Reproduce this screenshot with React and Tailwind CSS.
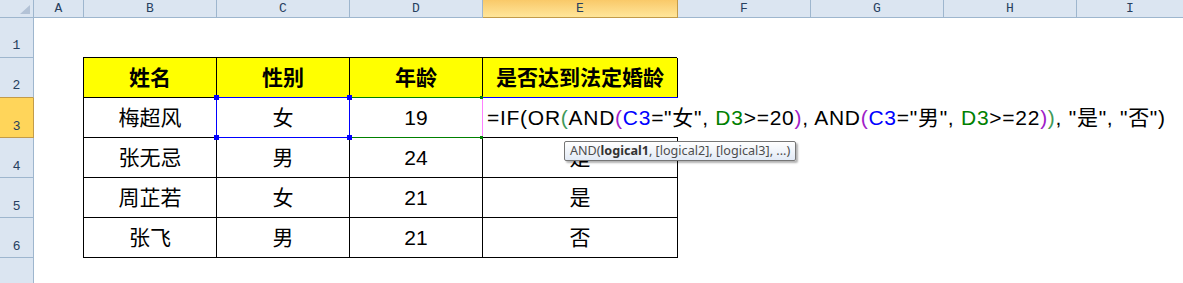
import React from 'react';

const sans = "'Liberation Sans','Noto Sans CJK SC',sans-serif";
const mono = "'Liberation Mono','DejaVu Sans Mono',monospace";

const colHeads = [
  ['A', 'w-[50px]'],
  ['B', 'w-[133px]'],
  ['C', 'w-[133px]'],
  ['D', 'w-[133px]'],
  ['E', 'w-[195px]'],
  ['F', 'w-[133px]'],
  ['G', 'w-[133px]'],
  ['H', 'w-[133px]'],
];

const rows = [
  ['梅超风', '女', '19', ''],
  ['张无忌', '男', '24', '是'],
  ['周芷若', '女', '21', '是'],
  ['张飞', '男', '21', '否'],
];

function RowHead({ n, active, serif, goldBottom }) {
  return (
    <div
      className={`flex h-[40px] w-[34px] shrink-0 items-end justify-center border-r border-b pb-[2px] text-[13px] text-[#27405f] ${
        active ? 'border-[#c29b4a] bg-[#ffd55a]' : goldBottom ? 'border-r-[#9eb6ce] border-b-[#c29b4a] bg-[#dbe5f1]' : 'border-[#9eb6ce] bg-[#dbe5f1]'
      }`}
      style={{ fontFamily: serif ? mono : sans }}
    >
      {n}
    </div>
  );
}

function Cell({ w, first, bold, bg, children }) {
  return (
    <div
      className={`flex h-[40px] shrink-0 items-center justify-center border-r border-b border-black ${w} ${first ? 'border-l' : ''} ${bg || ''} ${bold ? 'font-bold' : ''} text-[21px] text-black`}
    >
      {children}
    </div>
  );
}

function Formula() {
  const P = 'text-[#a020c8]';
  const G = 'text-[#3f9a5a]';
  return (
    <span className="whitespace-nowrap text-[21px] tracking-[0.73px] text-black" style={{ fontFamily: sans }}>
      =IF(OR<span className={G}>(</span>AND<span className={P}>(</span>
      <span className="text-[#0000ff]">C3</span>="女", <span className="text-[#008000]">D3</span>&gt;=20<span className={P}>)</span>, AND
      <span className={P}>(</span>
      <span className="text-[#0000ff]">C3</span>="男", <span className="text-[#008000]">D3</span>&gt;=22<span className={P}>)</span>
      <span className={G}>)</span>, "是", "否")
    </span>
  );
}

export default function App() {
  return (
    <div className="relative h-[283px] w-[1183px] overflow-hidden bg-white" style={{ fontFamily: sans }}>
      {/* column headers */}
      <div className="flex h-[18px]">
        <div className="relative h-[18px] w-[34px] shrink-0 border-r border-b border-[#9eb6ce] bg-[#dbe5f1]">
          <svg className="absolute right-[3px] bottom-[3px]" width="10" height="9" viewBox="0 0 10 9">
            <polygon points="10,0 10,9 0,9" fill="#b3c2d6" />
          </svg>
        </div>
        {colHeads.map(([l, w]) => (
          <div
            key={l}
            className={`flex h-[18px] shrink-0 items-center justify-center border-r border-b text-[13px] text-[#27405f] ${w} ${
              l === 'E' ? 'border-[#c29b4a] bg-gradient-to-b from-[#f9c969] to-[#ffe69a]' : 'border-[#9eb6ce] bg-[#dbe5f1]'
            }`}
            style={{ fontFamily: mono }}
          >
            {l}
          </div>
        ))}
        <div className="flex h-[18px] flex-1 items-center justify-center border-b border-[#9eb6ce] bg-[#dbe5f1] text-[13px] text-[#27405f]" style={{ fontFamily: mono }}>
          I
        </div>
      </div>

      {/* row 1 */}
      <div className="flex">
        <RowHead n="1" serif />
        <div className="w-[49px] shrink-0" />
        <div className="h-[40px] w-[594px] shrink-0 border-b border-black" />
      </div>

      {/* row 2: header */}
      <div className="flex">
        <RowHead n="2" serif goldBottom />
        <div className="w-[49px] shrink-0" />
        <Cell w="w-[134px]" first bold bg="bg-[#ffff00]">姓名</Cell>
        <Cell w="w-[133px]" bold bg="bg-[#ffff00]">性别</Cell>
        <Cell w="w-[133px]" bold bg="bg-[#ffff00]">年龄</Cell>
        <Cell w="w-[195px]" bold bg="bg-[#ffff00]">是否达到法定婚龄</Cell>
      </div>

      {rows.map((r, i) => (
        <div key={i} className="flex">
          <RowHead n={String(i + 3)} active={i === 0} />
          <div className="w-[49px] shrink-0" />
          <Cell w="w-[134px]" first>{r[0]}</Cell>
          <Cell w="w-[133px]">{r[1]}</Cell>
          <Cell w="w-[133px]">{r[2]}</Cell>
          {i === 0 ? (
            <div className="flex h-[40px] w-[195px] shrink-0 items-center overflow-visible border-b border-black pl-[4px]">
              <div className="relative z-10 bg-white">
                <Formula />
              </div>
            </div>
          ) : (
            <Cell w="w-[195px]">{r[3]}</Cell>
          )}
        </div>
      ))}

      {/* row 7, cut off below the window */}
      <div className="flex">
        <RowHead n="" />
      </div>

      {/* reference highlights over cells */}
      <div className="pointer-events-none absolute top-[97px] left-[349px] h-[41px] w-[134px] border border-[#008000]" />
      <div className="pointer-events-none absolute top-[97px] left-[216px] h-[41px] w-[134px] border border-[#0000ff]" />
      <div className="absolute top-[95px] left-[214px] h-[5px] w-[5px] bg-[#0000ff]" />
      <div className="absolute top-[95px] left-[347px] h-[5px] w-[5px] bg-[#0000ff]" />
      <div className="absolute top-[135px] left-[214px] h-[5px] w-[5px] bg-[#0000ff]" />
      <div className="absolute top-[135px] left-[347px] h-[5px] w-[5px] bg-[#0000ff]" />
      <div className="absolute top-[97px] left-[482px] h-px w-[196px] bg-[#0000ff]" />
      <div className="absolute top-[97px] left-[482px] h-[41px] w-px bg-[#ff80ff]" />
      <div className="absolute top-[96px] left-[480px] h-[3px] w-[3px] bg-[#008000]" />
      <div className="absolute top-[136px] left-[480px] h-[3px] w-[3px] bg-[#008000]" />

      {/* function tooltip */}
      <div
        className="absolute top-[141px] left-[564px] z-20 flex h-[20px] items-center rounded-[2px] border border-[#767676] bg-gradient-to-b from-white to-[#e2eaf6] px-[5px] text-[12.6px] text-[#4d4d4d] shadow-[2px_2px_2px_rgba(0,0,0,0.3)]"
        style={{ fontFamily: "'Noto Sans','Open Sans',sans-serif" }}
      >
        AND(<span className="font-bold text-[#333]">logical1</span>, [logical2], [logical3], ...)
      </div>
    </div>
  );
}
